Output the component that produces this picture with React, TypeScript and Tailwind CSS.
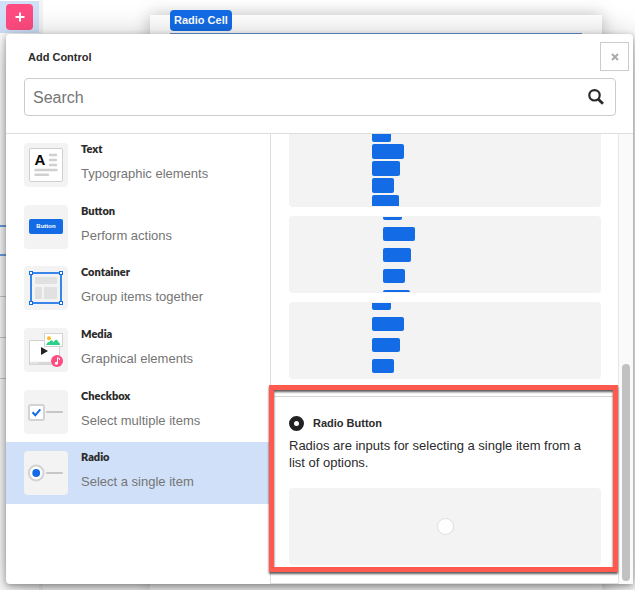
import type { ReactNode } from "react";

const sans = "font-['Liberation_Sans',Arial,sans-serif]";

function TextIcon() {
  return (
    <svg viewBox="0 0 44 44" className="size-11" aria-hidden="true">
      <rect x="5.5" y="5.5" width="33" height="33" rx="1.5" fill="#fff" stroke="#cfcfcf" />
      <text x="10.500" y="22.300" fontSize="15" fontWeight="700" fill="#000">A</text>
      <path d="M26 12h6M26 17h6M26 22h6M11.500 27h21M11.500 31.700h12.500" stroke="#d0d0d0" strokeWidth="2.4" strokeLinecap="round" />
    </svg>
  );
}

function ButtonIcon() {
  return (
    <span className="flex h-[15px] w-[34px] items-center justify-center rounded-[2px] bg-[#136ce6] text-[6px] font-bold text-white">
      Button
    </span>
  );
}

function ContainerIcon() {
  return (
    <svg viewBox="0 0 44 44" className="size-11" aria-hidden="true">
      <g fill="#e1e1e1">
        <rect x="11" y="11" width="22" height="7" rx="1" />
        <rect x="11" y="21" width="7" height="12" rx="1" />
        <rect x="20" y="21" width="13" height="12" rx="1" />
      </g>
      <rect x="7" y="7" width="30" height="30" fill="none" stroke="#3a85ea" strokeWidth="2" />
      <g fill="#fff" stroke="#136ce6">
        <rect x="5.500" y="5.500" width="3" height="3" />
        <rect x="35.500" y="5.500" width="3" height="3" />
        <rect x="5.500" y="35.500" width="3" height="3" />
        <rect x="35.500" y="35.500" width="3" height="3" />
      </g>
    </svg>
  );
}

function MediaIcon() {
  return (
    <svg viewBox="0 0 44 44" className="size-11" aria-hidden="true">
      <rect x="5.500" y="12.500" width="30" height="24" fill="#fff" stroke="#d3d3d3" />
      <path d="M6 35h29" stroke="#d8d8d8" strokeWidth="2.500" />
      <path d="M7 35h8" stroke="#fff" strokeWidth="1" strokeDasharray="1.500 1" />
      <path d="M17 19v8l7-4z" fill="#222" />
      <rect x="20.500" y="5.500" width="18" height="13" fill="#fff" stroke="#d3d3d3" />
      <circle cx="25" cy="10.300" r="2" fill="#fdbd1e" />
      <path d="M22 17c1-2 2-3.500 3.500-3 1-2.500 3-2 4 .3 2-3.500 4-3 4.500-.6 1 .3 1.800 1.500 2.200 3.300z" fill="#2fd08a" />
      <circle cx="33" cy="33" r="6" fill="#ff4b80" />
      <path d="M33.500 35V29.700l2 .8v1.500" fill="none" stroke="#fff" strokeWidth="1" />
      <circle cx="32.400" cy="35.200" r="1.500" fill="#fff" />
    </svg>
  );
}

function CheckboxIcon() {
  return (
    <svg viewBox="0 0 44 44" className="size-11" aria-hidden="true">
      <rect x="5" y="15" width="15" height="15" rx="2" fill="#fff" stroke="#d3d3d3" strokeWidth="2" />
      <path d="m8.500 22.300 2.800 3 5-6" fill="none" stroke="#136ce6" strokeWidth="2" />
      <path d="M23 22h15" stroke="#c6c6c6" strokeWidth="2" strokeLinecap="round" />
    </svg>
  );
}

function RadioIcon() {
  return (
    <svg viewBox="0 0 44 44" className="size-11" aria-hidden="true">
      <circle cx="12.200" cy="22" r="7.400" fill="#fff" stroke="#d3d3d3" strokeWidth="2" />
      <circle cx="12.200" cy="22" r="3.900" fill="#136ce6" />
      <path d="M23 22h15" stroke="#c6c6c6" strokeWidth="2" strokeLinecap="round" />
    </svg>
  );
}

const categories: { title: string; text: string; icon: ReactNode; active?: boolean }[] = [
  { title: "Text", text: "Typographic elements", icon: <TextIcon /> },
  { title: "Button", text: "Perform actions", icon: <ButtonIcon /> },
  { title: "Container", text: "Group items together", icon: <ContainerIcon /> },
  { title: "Media", text: "Graphical elements", icon: <MediaIcon /> },
  { title: "Checkbox", text: "Select multiple items", icon: <CheckboxIcon /> },
  { title: "Radio", text: "Select a single item", icon: <RadioIcon />, active: true },
];

const chipWidths = ["w-[19px]", "w-[32px]", "w-[28px]", "w-[22px]", "w-[27px]"];

function ChipPreview({ list, chip }: { list: string; chip: string }) {
  return (
    <div className="h-[77px] shrink-0 rounded bg-[#f3f3f3] py-px">
      <div className="h-full overflow-hidden">
        <div className={`flex flex-col items-start ${list}`}>
          {chipWidths.map((w) => (
            <span key={w} className={`shrink-0 rounded-[2px] bg-[#136ce6] ${w} ${chip}`} />
          ))}
        </div>
      </div>
    </div>
  );
}

function Backdrop() {
  return (
    <div className="absolute inset-0 flex bg-white">
      <div className="w-[39px] shrink-0">
        <div className="mt-px flex h-8 items-center bg-[#cfe0f8] pl-1.5">
          <button type="button" aria-label="Add" className="flex h-[26px] w-[27px] items-center justify-center rounded bg-[#ff4b80]">
            <svg viewBox="0 0 10 10" className="size-2.5" aria-hidden="true">
              <path d="M5 .500v9M.500 5h9" stroke="#fff" strokeWidth="2" />
            </svg>
          </button>
        </div>
        <div className="mt-[192px] h-[31px] border-y-2 border-[#6c9fe8]" />
        <div className="mt-10 h-[42px] border-y border-[#ccc]" />
        <div className="h-[41px] border-b border-[#ccc]" />
      </div>
      <div className="w-1 shrink-0 bg-[#f3f3f3]" />
      <div className="mt-[15px] mr-[33px] ml-[107px] flex-1 bg-white px-5 shadow-[0_0_16px_rgba(0,0,0,0.25)]">
        <div className="-mt-[5px] flex h-6 items-start border-b border-[#5f95dd]">
          <span className="flex h-[21px] items-center rounded bg-[#136ce6] px-1 text-[11px] font-bold whitespace-nowrap text-white">
            Radio Cell
          </span>
        </div>
      </div>
    </div>
  );
}

export default function App() {
  return (
    <main className={`relative h-screen overflow-hidden text-[#2b2b2b] ${sans}`}>
      <Backdrop />
      <section
        role="dialog"
        aria-label="Add Control"
        className="absolute top-[34px] right-[2px] bottom-[6px] left-[6px] flex flex-col rounded bg-white shadow-[0_2px_6px_rgba(0,0,0,0.35),0_6px_32px_rgba(0,0,0,0.3)]"
      >
        <header className="shrink-0 border-b border-[#dedede] pr-[17px] pb-[17px] pl-[18px]">
          <h1 className="pt-4 pl-1 text-[11px] leading-[14px] font-bold">Add Control</h1>
          <button
            type="button"
            aria-label="Close"
            className="absolute top-2 right-1 flex size-[29px] items-center justify-center border border-[#ccc] bg-white"
          >
            <svg viewBox="0 0 8 8" className="size-2" aria-hidden="true">
              <path d="m1 1 6 6M7 1 1 7" stroke="#aaa" strokeWidth="2" />
            </svg>
          </button>
          <div className="mt-3.5 flex h-[38px] items-center rounded border border-[#ccc] px-2">
            <input
              type="text"
              aria-label="Search"
              placeholder="Search"
              className="min-w-0 flex-1 pt-0.5 text-[16px] leading-5 outline-none placeholder:text-[#757575]"
            />
            <svg viewBox="0 0 16 16" className="mr-[3px] size-4 shrink-0" aria-hidden="true">
              <circle cx="6.500" cy="6.300" r="5.200" fill="none" stroke="#2b2b2b" strokeWidth="2.200" />
              <path d="m10.300 10.200 4.700 4.600" stroke="#2b2b2b" strokeWidth="2.800" />
            </svg>
          </div>
        </header>

        <div className="relative flex min-h-0 flex-1">
          <nav className="grid h-[370px] w-[264px] shrink-0 grid-rows-6">
            {categories.map((c) => (
              <button
                key={c.title}
                type="button"
                className={`flex gap-[13px] pt-[7px] pl-[18px] text-left ${c.active ? "bg-[#cfe0f8]" : ""}`}
              >
                <span className="mt-0.5 flex size-11 shrink-0 items-center justify-center rounded bg-[#f3f3f3]">
                  {c.icon}
                </span>
                <span className="flex flex-col gap-[7px]">
                  <span className="font-[Lato,'Open_Sans',sans-serif] text-[11px] leading-4 font-extrabold">
                    {c.title}
                  </span>
                  <span className="text-[13px] leading-5 text-[#757575]">{c.text}</span>
                </span>
              </button>
            ))}
          </nav>

          <div className="flex min-w-0 flex-1 flex-col justify-end gap-[9px] overflow-hidden border-b border-l border-[#dedede]">
            <div className="flex flex-col gap-[9px] pr-[17px] pl-[18px]">
              <ChipPreview list="-mt-1 gap-0.5 pl-[83px]" chip="h-[15px]" />
              <ChipPreview list="-mt-[11px] gap-[7px] pl-[94px]" chip="h-[14px]" />
              <ChipPreview list="-mt-[7px] gap-[7px] pl-[83px]" chip="h-[14px]" />
            </div>
            <article className="mt-2 border-t border-[#d5d5d5] pt-[18px] pr-[17px] pb-[18px] pl-[18px]">
              <div className="flex h-4 items-center gap-[9px]">
                <svg viewBox="0 0 15 15" className="size-[15px]" aria-hidden="true">
                  <circle cx="7.500" cy="7.500" r="5" fill="#fff" stroke="#222" strokeWidth="5" />
                </svg>
                <h2 className="text-[11px] leading-4 font-bold">Radio Button</h2>
              </div>
              <p className="mt-1.5 mb-[17px] pr-3 text-[13px] leading-[17px]">
                Radios are inputs for selecting a single item from a list of options.
              </p>
              <div className="flex h-[77px] items-center justify-center rounded bg-[#f3f3f3]">
                <input
                  type="radio"
                  aria-label="Radio Button"
                  className="size-[17px] appearance-none rounded-full border border-[#ddd] bg-white"
                />
              </div>
            </article>
          </div>

          <div className="flex w-[15px] shrink-0 flex-col justify-end border-l border-[#e5e5e5] bg-[#fafafa] px-[3px] pb-[3px]">
            <div className="h-[217px] rounded-full bg-[#c1c1c1]" />
          </div>

          <div className="pointer-events-none absolute right-[15px] bottom-3 left-[263px] h-[187px] border-[5px] border-[#ff5a4d] drop-shadow-[0_2px_1px_rgba(0,0,0,0.65)]" />
        </div>
      </section>
    </main>
  );
}
